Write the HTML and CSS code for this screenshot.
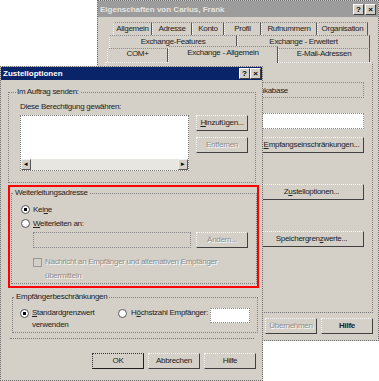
FILE: index.html
```html
<!DOCTYPE html>
<html lang="de">
<head>
  <meta charset="UTF-8">
  <title>Zustelloptionen</title>
  <link rel="stylesheet" href="styles.css">
</head>
<body>
  <div class="win win-back">
    <div class="titlebar titlebar-inactive">
      <span class="title">Eigenschaften von Carius, Frank</span>
      <span class="tb">?</span><span class="tb">×</span>
    </div>
    <div class="tabrow row1">
      <div class="tab">Allgemein</div>
      <div class="tab">Adresse</div>
      <div class="tab">Konto</div>
      <div class="tab">Profil</div>
      <div class="tab">Rufnummern</div>
      <div class="tab">Organisation</div>
    </div>
    <div class="tabrow row2">
      <div class="tab">Exchange-Features</div>
      <div class="tab">Exchange - Erweitert</div>
    </div>
    <div class="tabrow row3">
      <div class="tab">COM+</div>
      <div class="tab tab-sel">Exchange - Allgemein</div>
      <div class="tab">E-Mail-Adressen</div>
    </div>
    <div class="panel">
      <div class="field-ro"><span>SERVER/Postfachdatenkabase</span></div>
      <div class="edit panel-edit"></div>
      <button class="btn btn-wide btn-empf"><u>E</u>mpfangseinschränkungen...</button>
      <button class="btn btn-wide btn-gap">Z<u>u</u>stelloptionen...</button>
      <button class="btn btn-wide btn-gap">Speichergren<u>z</u>werte...</button>
    </div>
    <div class="actions">
      <button class="btn">OK</button>
      <button class="btn">Abbrechen</button>
      <button class="btn dis">Übernehmen</button>
      <button class="btn bold">Hilfe</button>
    </div>
  </div>

  <div class="win win-front">
    <div class="titlebar titlebar-active">
      <span class="title">Zustelloptionen</span>
      <span class="tb">?</span><span class="tb">×</span>
    </div>
    <div class="dlg-body">
      <fieldset class="grp1">
        <legend>Im Auftrag senden:</legend>
        <div class="grp1-inner">
          <div class="label">Diese Berechtigung gewähren:</div>
          <div class="listrow">
            <div class="listbox">
              <div class="hscroll">
                <span class="sb-btn">◂</span>
                <span class="sb-track"></span>
                <span class="sb-btn">▸</span>
              </div>
            </div>
            <div class="btncol">
              <button class="btn"><u>H</u>inzufügen...</button>
              <button class="btn dis">Entfernen</button>
            </div>
          </div>
        </div>
      </fieldset>

      <div class="redbox">
        <fieldset class="grp2">
          <legend>Weiterleitungsadresse</legend>
          <div class="grp2-inner">
            <div class="radio-row"><span class="radio on"></span><span>Kei<u>n</u>e</span></div>
            <div class="radio-row"><span class="radio"></span><span><u>W</u>eiterleiten an:</span></div>
            <div class="editrow">
              <div class="edit-dis"></div>
              <button class="btn dis">Ändern...</button>
            </div>
            <div class="checkrow">
              <span class="check"></span>
              <span class="dis">Nachricht an Empfänger und alternativen Empfänger<br>übermitteln</span>
            </div>
          </div>
        </fieldset>
      </div>

      <fieldset class="grp3">
        <legend>Empfängerbeschränkungen</legend>
        <div class="grp3-inner">
          <span class="radio on"></span>
          <span class="opt-label"><u>S</u>tandardgrenzwert<br>verwenden</span>
          <span class="radio radio-2"></span>
          <span class="opt-label2">H<u>ö</u>chstzahl Empfänger:</span>
          <div class="edit max-edit"></div>
        </div>
      </fieldset>

      <div class="sep"></div>

      <div class="dlg-actions">
        <button class="btn btn-default">OK</button>
        <button class="btn">Abbrechen</button>
        <button class="btn">Hilfe</button>
      </div>
    </div>
  </div>
</body>
</html>
```

FILE: styles.css
```css
* {
  box-sizing: border-box;
}
body {
  margin: 0;
  width: 379px;
  height: 381px;
  overflow: hidden;
  position: relative;
  background: #fff;
  font-family: "Liberation Sans", Arial, sans-serif;
  font-size: 8px;
  letter-spacing: -0.3px;
  color: #222;
}
u {
  text-decoration: underline;
}
.win {
  position: absolute;
  background: #d4d0c8;
  border: 1px dotted #6a6a6a;
}
.win-back {
  left: 97px;
  top: 0;
  width: 282px;
  height: 341px;
}
.win-front {
  left: 0;
  top: 66px;
  width: 263px;
  height: 315px;
}

/* title bars */
.titlebar {
  display: flex;
  align-items: center;
  gap: 1px;
}
.titlebar .title {
  flex: 1;
  font-weight: bold;
  letter-spacing: 0;
  white-space: nowrap;
}
.titlebar-inactive {
  height: 16px;
  background: #9c9c9c;
  color: #e6e4de;
  padding: 0 2px;
}
.titlebar-active {
  height: 13px;
  background: #0a246a;
  color: #fff;
  padding: 0 1px 0 2px;
  gap: 0;
}
.tb {
  width: 11px;
  height: 11px;
  background: #d4d0c8;
  border: 1px solid;
  border-color: #fff #404040 #404040 #fff;
  color: #000;
  font-size: 8px;
  font-weight: bold;
  line-height: 9px;
  text-align: center;
  letter-spacing: 0;
}

/* tabs */
.tabrow {
  display: grid;
  height: 13px;
}
.row1 {
  margin: 5px 0 0 15px;
  grid-template-columns: 39px 40px 32px 37px 56px 51px;
}
.row2 {
  margin-left: 11px;
  grid-template-columns: 128px 133px;
}
.row3 {
  margin-left: 9px;
  height: 14px;
  align-items: start;
  grid-template-columns: 61px 110px 92px;
}
.tab {
  border-top: 1px dotted #8a8a8a;
  border-left: 1px dotted #fff;
  border-right: 1px solid #555;
  text-align: center;
  line-height: 12px;
  white-space: nowrap;
  background: #d4d0c8;
}
.row3 .tab {
  height: 14px;
  line-height: 10px;
}
.row3 .tab-sel {
  margin-top: -2px;
  height: 17px;
  line-height: 12px;
  position: relative;
  z-index: 1;
}

/* buttons */
.btn {
  width: 52px;
  height: 16px;
  padding: 0;
  background: #d4d0c8;
  border-width: 1px;
  border-style: dotted solid solid dotted;
  border-color: #fafafa #404040 #404040 #fafafa;
  font: inherit;
  letter-spacing: inherit;
  color: inherit;
  line-height: 14px;
  text-align: center;
  white-space: nowrap;
}
.btn-default {
  border-color: #333 #202020 #202020 #333;
}
.bold {
  font-weight: bold;
}
.dis {
  color: #8c8c8c;
  text-shadow: 1px 1px 0 #fff;
}

/* back panel */
.panel {
  margin-left: 7px;
  width: 268px;
  height: 251px;
  border: 1px dotted #777;
  border-top-color: #f4f4f4;
  border-left-color: #f4f4f4;
  display: flex;
  flex-direction: column;
  align-items: flex-end;
  padding: 19px 8px 0 0;
}
.field-ro {
  width: 170px;
  height: 16px;
  border: 1px dotted #888;
  display: flex;
  justify-content: flex-end;
  align-items: center;
  padding-right: 75px;
  white-space: nowrap;
}
.edit {
  background: #fff;
  border: 1px dotted #888;
}
.panel-edit {
  width: 170px;
  height: 16px;
  margin-top: 15px;
}
.panel .btn-wide {
  width: 105px;
}
.btn-empf {
  margin-top: 8px;
}
.btn-gap {
  margin-top: 31px;
}
.actions {
  display: flex;
  justify-content: flex-end;
  gap: 4px;
  margin-top: 5px;
  padding-right: 5px;
}

/* front dialog */
.dlg-body {
  padding: 0 6px 0 7px;
}
fieldset {
  margin: 0;
  padding: 0;
  min-width: 0;
  border: 1px dotted #808080;
}
legend {
  padding: 0 1px;
  margin-left: 2px;
  line-height: 12px;
}
.grp1 {
  height: 97px;
  margin-top: 6px;
}
.grp1 legend {
  margin-left: 7px;
}
.grp1-inner {
  padding: 3px 0 0 11px;
}
.label {
  line-height: 12px;
}
.listrow {
  display: flex;
  margin-top: 2px;
}
.listbox {
  width: 169px;
  height: 56px;
  background: #fff;
  border: 1px dotted #777;
  display: flex;
  flex-direction: column;
  justify-content: flex-end;
}
.hscroll {
  height: 11px;
  display: flex;
}
.sb-btn {
  width: 10px;
  background: #d4d0c8;
  border: 1px solid;
  border-color: #eee #555 #555 #eee;
  font-size: 7px;
  line-height: 8px;
  text-align: center;
  color: #000;
}
.sb-track {
  flex: 1;
  background: #e8e6e1;
}
.btncol {
  display: flex;
  flex-direction: column;
  gap: 6px;
  margin-left: 7px;
}

.redbox {
  width: 251px;
  height: 103px;
  margin-top: 2px;
  border: 2px solid #f00;
  padding-left: 1px;
}
.grp2 {
  width: 246px;
  height: 97px;
}
.grp2-inner {
  padding: 4px 0 0 9px;
}
.radio-row {
  display: flex;
  align-items: center;
  gap: 3px;
  height: 12px;
}
.radio-row + .radio-row {
  margin-top: 2px;
}
.radio {
  flex: none;
  width: 9px;
  height: 9px;
  border-radius: 50%;
  border: 1px solid #555;
  background: #fff;
}
.radio.on {
  background: radial-gradient(circle, #000 0 1.5px, #fff 2px);
}
.editrow {
  display: flex;
  gap: 5px;
  margin: 3px 0 0 12px;
}
.edit-dis {
  width: 158px;
  height: 16px;
  border: 1px dotted #888;
}
.checkrow {
  display: flex;
  align-items: flex-start;
  gap: 3px;
  margin: 7px 0 0 12px;
  line-height: 14px;
}
.check {
  flex: none;
  width: 9px;
  height: 9px;
  margin-top: 3px;
  border: 1px solid #999;
}

.grp3 {
  width: 246px;
  height: 42px;
  margin: 3px 0 0 4px;
}
.grp3-inner {
  display: flex;
  align-items: flex-start;
  padding: 4px 0 0 7px;
  line-height: 12px;
}
.grp3-inner .radio {
  margin-top: 2px;
}
.opt-label {
  width: 80px;
  margin-left: 3px;
}
.radio-2 {
  margin-left: 6px;
}
.opt-label2 {
  margin-left: 4px;
  white-space: nowrap;
}
.max-edit {
  width: 40px;
  height: 15px;
  margin: 1px 0 0 2px;
}

.sep {
  width: 244px;
  margin: 5px 0 0 2px;
  border-top: 1px dotted #777;
}
.dlg-actions {
  display: flex;
  justify-content: flex-end;
  gap: 4px;
  margin-top: 14px;
}
```
